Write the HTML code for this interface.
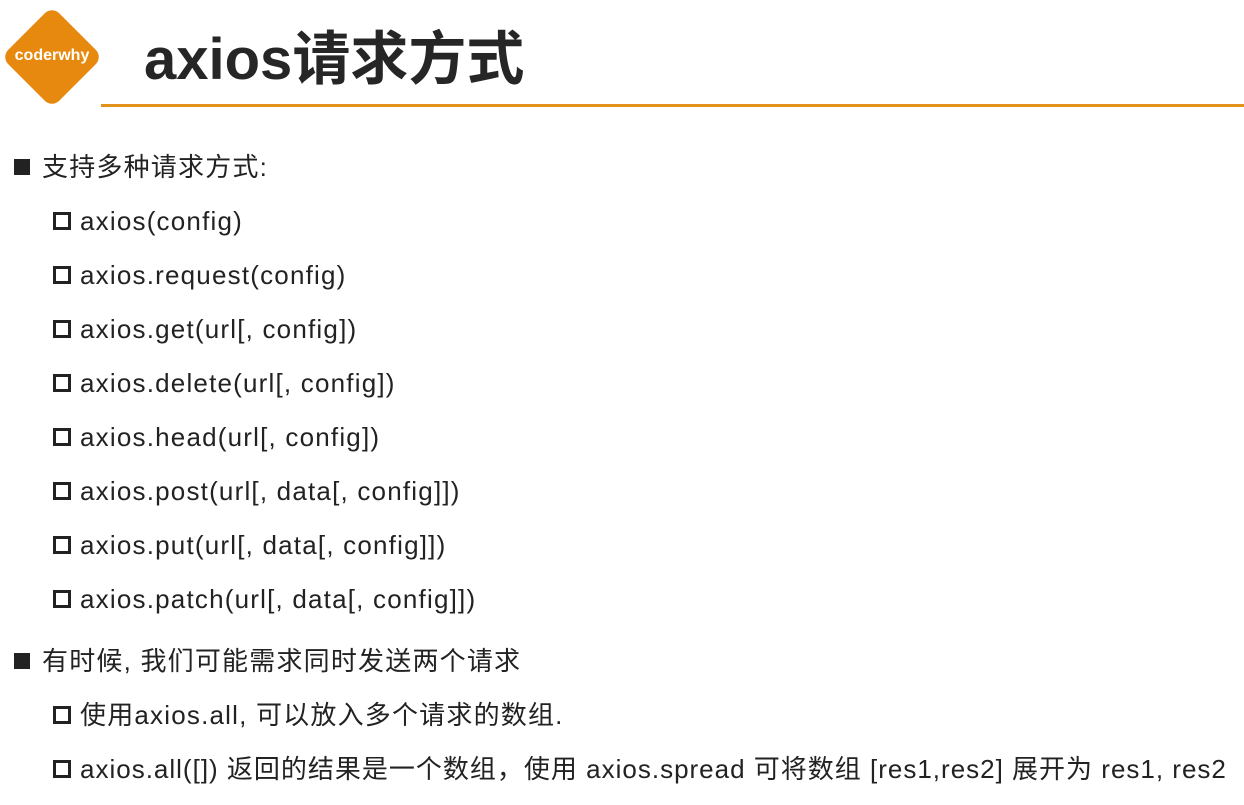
<!DOCTYPE html>
<html><head><meta charset="utf-8"><style>
body{margin:0;width:1244px;height:805px;background:#fff;overflow:hidden;position:relative;font-family:"Liberation Sans","Noto Sans CJK SC",sans-serif;color:#222}
.logo{position:absolute;left:16px;top:21px;width:72px;height:72px;background:#e8890f;transform:rotate(45deg);border-radius:10px}
.logot{position:absolute;left:2px;top:47px;width:100px;text-align:center;color:#fff;font-weight:bold;font-size:16px}
.title{position:absolute;left:144px;top:12px;font-size:58px;font-weight:bold;color:#262626}
.line{position:absolute;left:101px;top:104px;width:1143px;height:3px;background:#e3921c}
.r{position:absolute;font-size:26px;line-height:30px;white-space:nowrap;letter-spacing:1.2px}
.l1{left:42px}.l2{left:80px}
.b1{position:absolute;left:14px;width:16px;height:16px;background:#222}
.b2{position:absolute;left:53px;width:12px;height:12px;border:3px solid #222}
</style></head><body>
<div class="logo"></div><div class="logot">coderwhy</div>
<div class="title">axios请求方式</div>
<div class="line"></div>

<div class="b1" style="top:159px"></div><div class="r l1" style="top:152px">支持多种请求方式:</div>
<div class="b2" style="top:212px"></div><div class="r l2" style="top:206px">axios(config)</div>
<div class="b2" style="top:266px"></div><div class="r l2" style="top:260px">axios.request(config)</div>
<div class="b2" style="top:320px"></div><div class="r l2" style="top:314px">axios.get(url[, config])</div>
<div class="b2" style="top:374px"></div><div class="r l2" style="top:368px">axios.delete(url[, config])</div>
<div class="b2" style="top:428px"></div><div class="r l2" style="top:422px">axios.head(url[, config])</div>
<div class="b2" style="top:482px"></div><div class="r l2" style="top:476px">axios.post(url[, data[, config]])</div>
<div class="b2" style="top:536px"></div><div class="r l2" style="top:530px">axios.put(url[, data[, config]])</div>
<div class="b2" style="top:590px"></div><div class="r l2" style="top:584px">axios.patch(url[, data[, config]])</div>
<div class="b1" style="top:653px"></div><div class="r l1" style="top:646px">有时候, 我们可能需求同时发送两个请求</div>
<div class="b2" style="top:706px"></div><div class="r l2" style="top:700px">使用axios.all, 可以放入多个请求的数组.</div>
<div class="b2" style="top:760px"></div><div class="r l2" style="top:754px;letter-spacing:1px">axios.all([]) 返回的结果是一个数组，使用 axios.spread 可将数组 [res1,res2] 展开为 res1, res2</div>
</body></html>
